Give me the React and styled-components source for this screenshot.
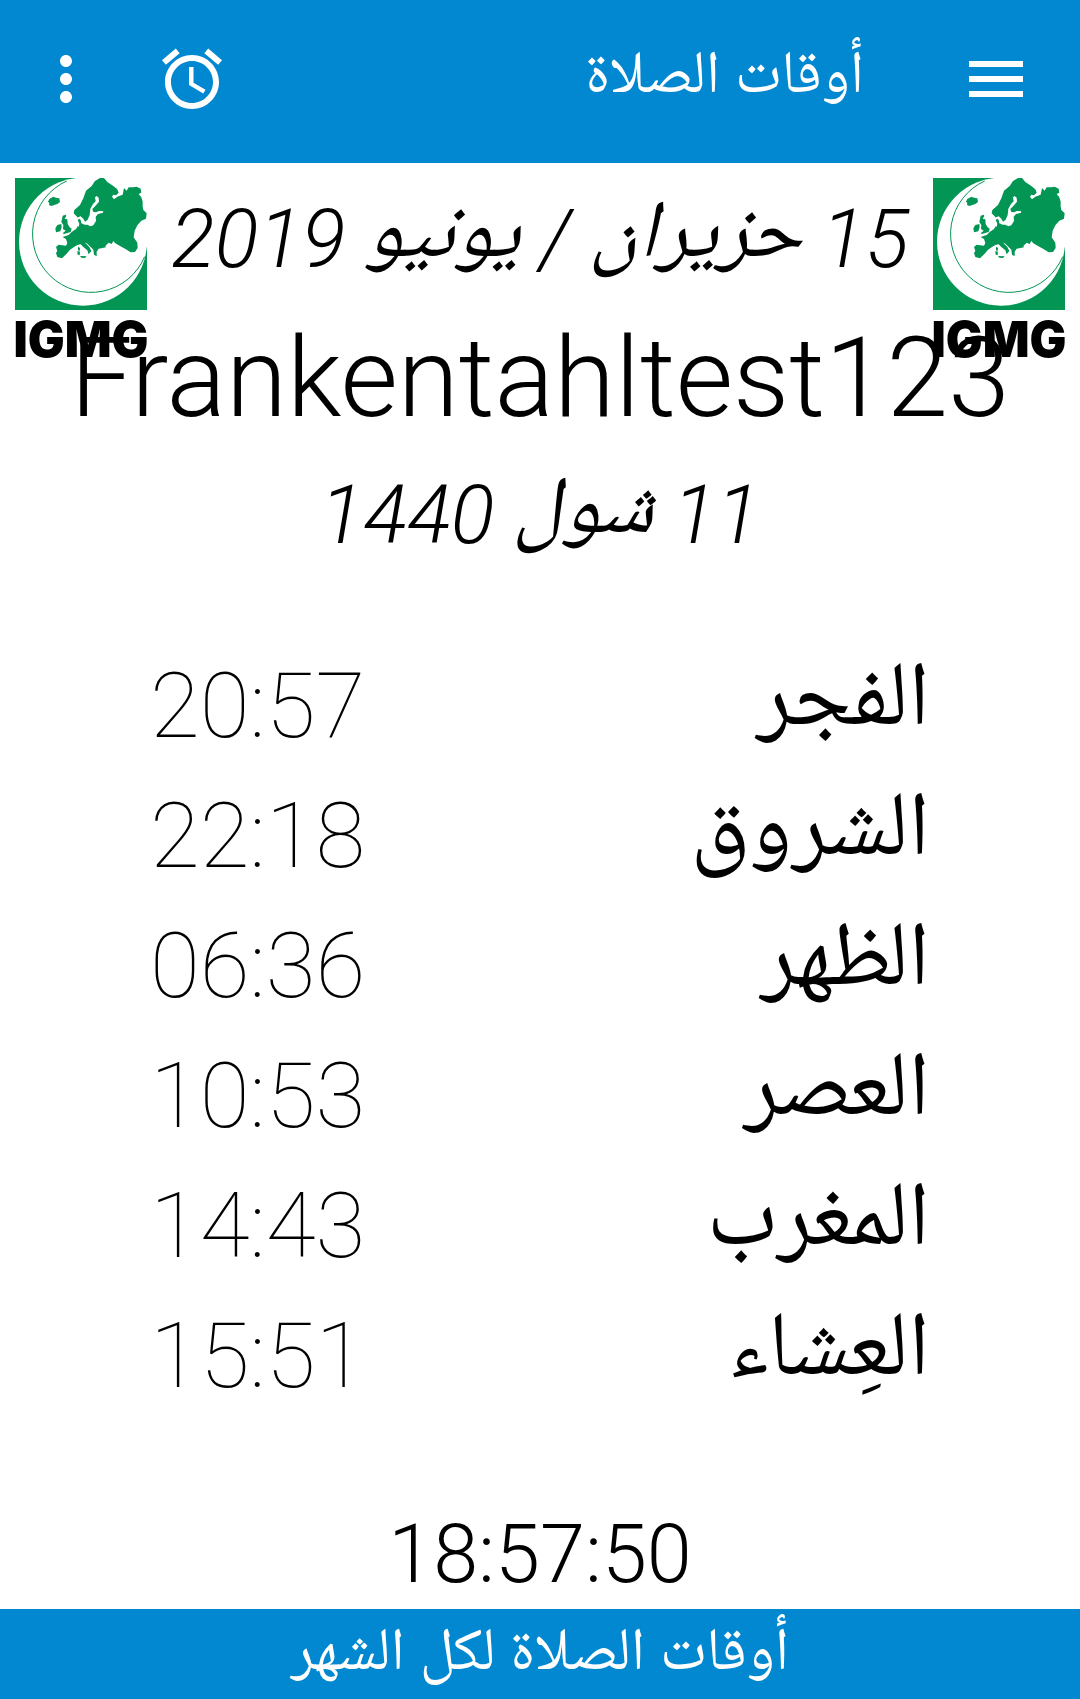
import React from 'react';
import styled, { createGlobalStyle } from 'styled-components';

const GlobalStyle = createGlobalStyle`
  *, *::before, *::after {
    box-sizing: border-box;
  }
  body {
    margin: 0;
    background: #fff;
    color: #000;
    font-family: Roboto, 'Noto Naskh Arabic', 'DejaVu Sans', sans-serif;
  }
`;

const Screen = styled.div`
  display: flex;
  flex-direction: column;
  min-height: 100vh;
`;

const AppBar = styled.header`
  display: flex;
  align-items: flex-start;
  padding-bottom: 5px;
  background: #0288d1;
  color: #fff;
`;

const IconButton = styled.button`
  display: flex;
  align-items: center;
  justify-content: center;
  flex: none;
  width: ${(p) => p.$width}px;
  height: 158px;
  padding: 0;
  border: 0;
  background: none;
  color: inherit;
  cursor: pointer;
`;

const Icon = styled.svg`
  width: 72px;
  height: 72px;
  fill: currentColor;
`;

const AppTitle = styled.h1`
  flex: 1;
  margin: 0;
  padding-inline-start: 48px;
  font-size: 60px;
  font-weight: 400;
  line-height: 144px;
`;

const Main = styled.main`
  display: flex;
  flex-direction: column;
  flex: 1;
`;

const Hero = styled.section`
  position: relative;
  padding-top: 8px;
  text-align: center;
  white-space: nowrap;
`;

const DateLine = styled.p`
  margin: 0;
  font-size: 81px;
  font-style: italic;
  font-weight: 300;
  line-height: 138px;
`;

const Month = styled.span`
  line-height: 1;
  vertical-align: 11px;
`;

const MosqueName = styled.h2`
  position: relative;
  z-index: 1;
  margin: 0;
  font-size: 111px;
  font-weight: 300;
  line-height: 138px;
`;

const LogoBox = styled.div`
  position: absolute;
  top: 15px;
  ${(p) => p.$side}: 15px;
  width: 132px;
`;

const Emblem = styled.svg`
  display: block;
  width: 100%;
`;

const Wordmark = styled.div`
  display: flex;
  justify-content: center;
  margin-top: 6px;
  direction: ltr;
  font-family: Inter, sans-serif;
  font-size: 49px;
  font-weight: 900;
  line-height: 48px;
`;

const Times = styled.table`
  width: 100%;
  margin-top: 56px;
  border-collapse: collapse;
`;

const TimeRow = styled.tr`
  height: 130px;
  font-size: 91px;
  line-height: 130px;
`;

const PrayerName = styled.th`
  padding: 0;
  padding-inline-start: 150px;
  font-weight: 400;
  line-height: 104px;
  text-align: start;
  vertical-align: top;
`;

const PrayerTime = styled.td`
  padding: 0;
  padding-inline-end: 150px;
  font-weight: 100;
  text-align: end;
  vertical-align: top;

  time {
    display: inline-block;
    direction: ltr;
  }
`;

const Clock = styled.time`
  margin-top: auto;
  font-size: 81px;
  font-weight: 300;
  line-height: 108px;
  text-align: center;
`;

const MonthLink = styled.a`
  display: block;
  padding-bottom: 10px;
  background: #0288d1;
  color: #fff;
  font-size: 60px;
  line-height: 80px;
  text-align: center;
  text-decoration: none;
`;

const prayers = [
  ['الفجر', '20:57'],
  ['الشروق', '22:18'],
  ['الظهر', '06:36'],
  ['العصر', '10:53'],
  ['المغرب', '14:43'],
  ['العِشاء', '15:51'],
];

const GREEN = '#029553';

function Logo({ side }) {
  return (
    <LogoBox $side={side}>
      <Emblem viewBox="45 54 396 396" aria-hidden="true">
        <path fill={GREEN} d="M45 54h396v396H45z" />
        <circle cx="249" cy="245" r="192" fill="#fff" />
        <path fill="#fff" d="M232 54h209v208l-60 10-140-120z" />
        <path
          fill="none"
          stroke={GREEN}
          strokeWidth="3"
          d="M200 63A175 175 0 1 0 434 290"
        />
        <path
          fill={GREEN}
          d="M221 160l2-10 17-15 10-20 8-23 17-14 10-15 15-9h12l10 12 18 12 12 10 4 10-8 8-8-2-4 6 6 8 10-8 16-6 4-20 8 8 6-10 14 0 10-2 12 6 2 12-8 4 8 10 4 13v15l2 10 10 10-2 16-14 6-12 14-8 16-3 20 11 16 1 16-8 12-13 1-17-11-19-10-10-6-6-7-5 9-9-4-10 10 2 4-22 4-6 9v14l-8-5-2-15-8-8-10-10-8-4 14 14 6 12-8 10-4-12-12-10-8-8-10 2-10 6-12 8-10 12-14 14-14-4-4-12 4-6-4-12 8-7 22 3 4-8-4-12-10-6 18-6 10-10 12-8 6-10 2-8-6-10 2-8z"
        />
        <path
          fill="#fff"
          d="M228 174l14-5 8 7 5 9 8-6 6-14 2-19 8-14 8-8-2-12 5-4 6 5 1 12-11 13-9 9 3 9 8 1 9-4 13 1-1 4-15 4-7 8 1 13-8 13-9 3-9-5-8 0-10-4-2-10-4-4-5 4 5 11-2 10-7-7z"
        />
        <path
          fill={GREEN}
          d="M144 125l4-8 12-7 8 3 10 2 2 11-8 6-18 6-7-3 1-6zM188 167l9-3 2 4-5 8 8 2 1 14 6 10 6 4-3 10-20 6-4-2 9-8-8-5 1-12-6-9zM172 195l12-3 1 10-4 12-13 3-2-12zM234 260l6 4-1 9-5-2zM232 273l8 2-1 11-6-2zM240 288l20 1-5 5-11-1z"
        />
      </Emblem>
      <Wordmark>IGMG</Wordmark>
    </LogoBox>
  );
}

export default function App() {
  return (
    <Screen dir="rtl" lang="ar">
      <GlobalStyle />
      <AppBar>
        <IconButton type="button" $width={168} aria-label="القائمة">
          <Icon viewBox="0 0 24 24">
            <path d="M3 18h18v-2H3v2zm0-5h18v-2H3v2zm0-7v2h18V6H3z" />
          </Icon>
        </IconButton>
        <AppTitle>أوقات الصلاة</AppTitle>
        <IconButton type="button" $width={120} aria-label="المنبه">
          <Icon viewBox="0 0 24 24">
            <path d="M22 5.72l-4.6-3.86-1.29 1.53 4.6 3.86L22 5.72zM7.88 3.39L6.6 1.86 2 5.71l1.29 1.53 4.59-3.85zM12.5 8H11v6l4.75 2.85.75-1.23-4-2.37V8zM12 4c-4.97 0-9 4.03-9 9s4.02 9 9 9c4.97 0 9-4.03 9-9s-4.03-9-9-9zm0 16c-3.87 0-7-3.13-7-7s3.13-7 7-7 7 3.13 7 7-3.13 7-7 7z" />
          </Icon>
        </IconButton>
        <IconButton type="button" $width={132} aria-label="المزيد">
          <Icon viewBox="0 0 24 24">
            <path d="M12 8c1.1 0 2-.9 2-2s-.9-2-2-2-2 .9-2 2 .9 2 2 2zm0 2c-1.1 0-2 .9-2 2s.9 2 2 2 2-.9 2-2-.9-2-2-2zm0 6c-1.1 0-2 .9-2 2s.9 2 2 2 2-.9 2-2-.9-2-2-2z" />
          </Icon>
        </IconButton>
      </AppBar>
      <Main>
        <Hero>
          <Logo side="right" />
          <Logo side="left" />
          <DateLine>
            15 <Month>حزيران</Month> / <Month>يونيو</Month> 2019
          </DateLine>
          <MosqueName>Frankentahltest123</MosqueName>
          <DateLine>
            11 <Month>شول</Month> 1440
          </DateLine>
        </Hero>
        <Times>
          <tbody>
            {prayers.map(([name, time]) => (
              <TimeRow key={name}>
                <PrayerName scope="row">{name}</PrayerName>
                <PrayerTime>
                  <time>{time}</time>
                </PrayerTime>
              </TimeRow>
            ))}
          </tbody>
        </Times>
        <Clock>18:57:50</Clock>
      </Main>
      <MonthLink href="#month">أوقات الصلاة لكل الشهر</MonthLink>
    </Screen>
  );
}
